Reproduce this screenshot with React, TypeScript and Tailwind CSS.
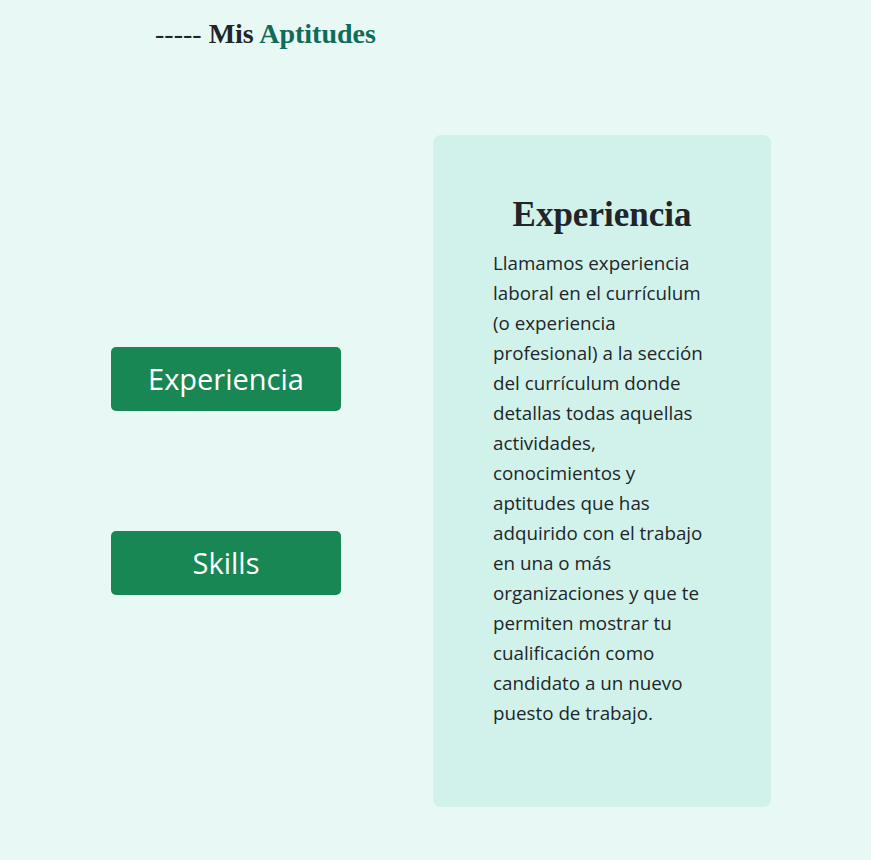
const lines = [
  "Llamamos experiencia",
  "laboral en el currículum",
  "(o experiencia",
  "profesional) a la sección",
  "del currículum donde",
  "detallas todas aquellas",
  "actividades,",
  "conocimientos y",
  "aptitudes que has",
  "adquirido con el trabajo",
  "en una o más",
  "organizaciones y que te",
  "permiten mostrar tu",
  "cualificación como",
  "candidato a un nuevo",
  "puesto de trabajo.",
];

export default function App() {
  return (
    <div className="min-h-screen bg-[#e8f8f4] font-['Open_Sans',sans-serif] text-[#212529]">
      <h1 className="pl-[155px] pt-[15px] font-['Liberation_Serif',serif] text-[28px] leading-[38px]">
        <span>----- </span>
        <span className="font-bold">Mis </span>
        <span className="font-bold text-[#0f6b5a]">Aptitudes</span>
      </h1>

      <div className="mt-[82px] flex items-center pb-[53px]">
        <div className="flex flex-col gap-[120px] pl-[111px]">
          <button className="flex h-[64px] w-[230px] items-center justify-center rounded-[5px] bg-[#198754] text-[29px] text-white">
            Experiencia
          </button>
          <button className="flex h-[64px] w-[230px] items-center justify-center rounded-[5px] bg-[#198754] text-[29px] text-white">
            Skills
          </button>
        </div>

        <div className="ml-[92px] flex h-[672px] w-[338px] flex-col rounded-[8px] bg-[#d1f2ea] px-[60px] pt-[58px]">
          <h2 className="text-center font-['Liberation_Serif',serif] text-[35px] font-bold leading-[44px]">
            Experiencia
          </h2>
          <p className="mt-[11px] text-[18.8px] leading-[30px]">
            {lines.map((l) => (
              <span key={l} className="block whitespace-nowrap">
                {l}
              </span>
            ))}
          </p>
        </div>
      </div>
    </div>
  );
}
